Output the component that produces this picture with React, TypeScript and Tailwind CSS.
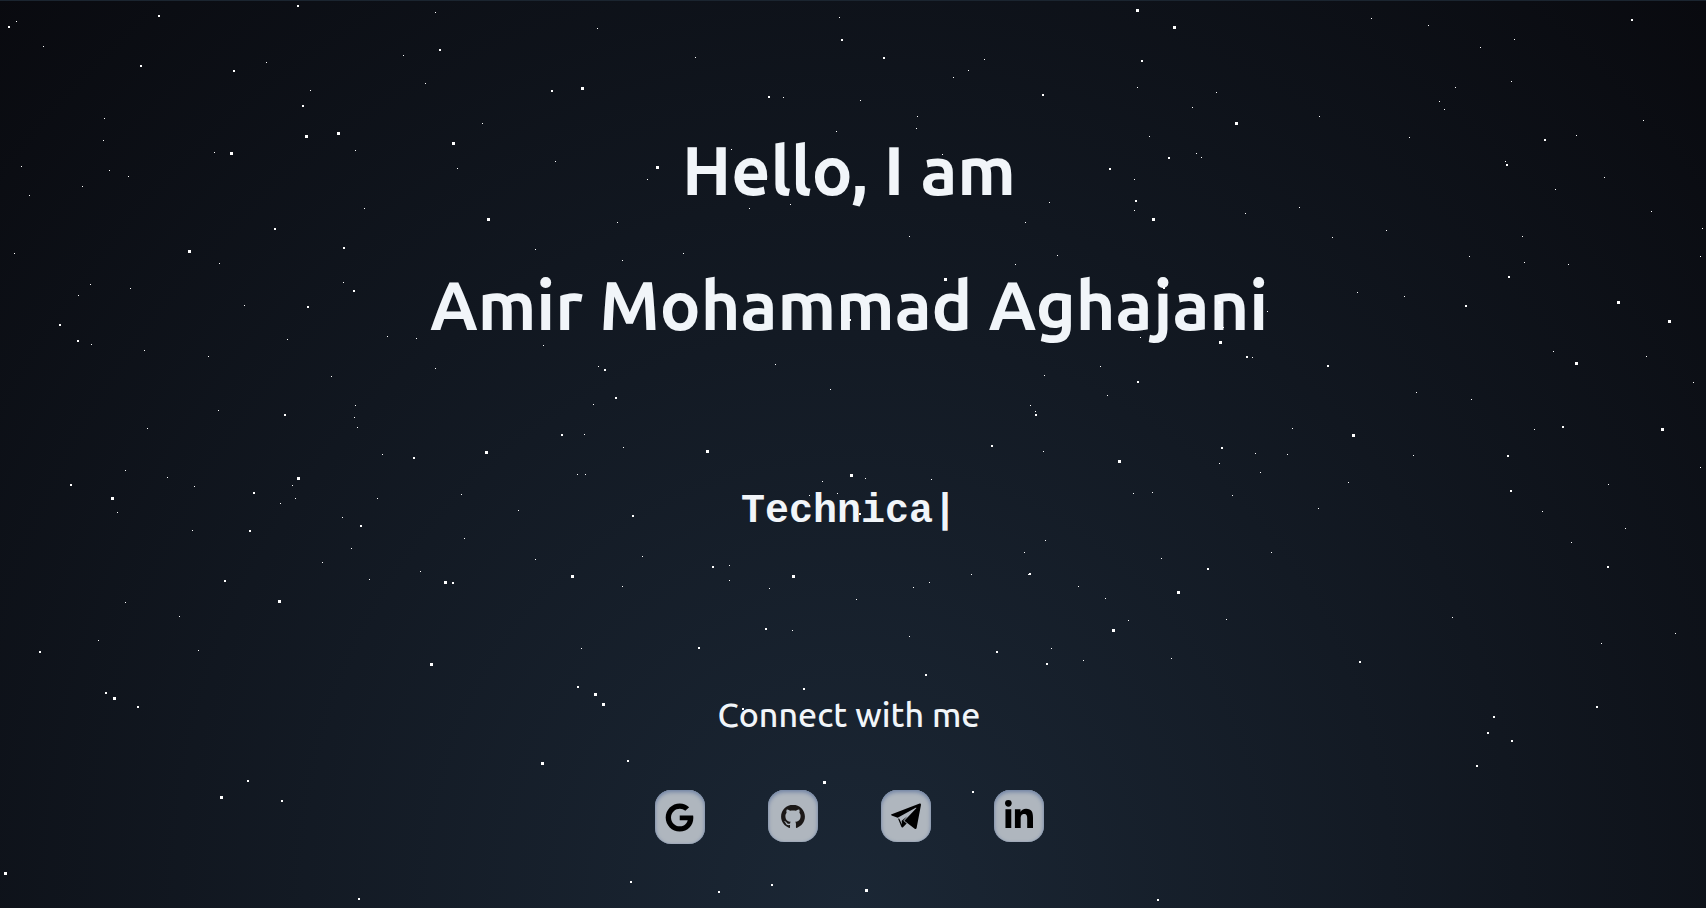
import React from "react";
import { FaGoogle, FaLinkedinIn } from "react-icons/fa";
import { DiGithubBadge } from "react-icons/di";

type Point = [number, number];

const SMALL_STARS: Point[] = [
  [16,21],[43,46],[266,62],[435,12],[403,55],[425,83],[310,90],[104,118],[103,140],[21,166],[109,170],[128,176],
  [82,186],[29,195],[214,152],[355,150],[482,123],[457,168],[555,161],[364,208],[535,249],[14,253],[219,263],
  [90,284],[78,295],[130,288],[343,282],[244,305],[91,344],[144,350],[208,356],[287,339],[387,336],[416,338],
  [543,345],[435,368],[331,376],[355,405],[354,417],[357,427],[218,410],[147,428],[382,454],
  [597,28],[839,17],[695,57],[984,59],[968,70],[953,77],[783,97],[860,100],[917,116],[916,128],[836,131],
  [731,149],[647,179],[749,208],[790,204],[942,154],[617,222],[683,253],[622,260],[909,236],[1049,202],
  [1025,222],[1057,255],[1015,264],[1134,179],[1134,210],[598,366],[775,364],[830,389],[593,404],[584,434],
  [623,447],[1100,366],[1044,375],[1107,395],[1030,405],[1035,411],[1043,451],[1137,87],
  [1216,92],[1192,107],[1371,18],[1428,25],[1514,39],[1480,47],[1511,81],[1455,87],[1439,101],[1444,109],
  [1319,116],[1409,137],[1643,120],[1576,135],[1505,161],[1604,177],[1555,189],[1651,211],[1702,228],[1700,256],
  [1149,136],[1196,153],[1201,157],[1245,213],[1299,207],[1332,237],[1386,230],[1522,236],[1469,256],[1524,262],
  [1568,264],[1357,292],[1404,296],[1267,311],[1140,337],[1252,357],[1553,351],[1646,356],[1693,382],[1416,392],
  [1471,399],[1292,428],[1534,429],[1255,453],[1287,454],[1223,327],
  [125,470],[167,477],[194,486],[292,485],[295,498],[280,503],[377,498],[461,494],[518,510],[342,517],[117,512],
  [192,530],[351,548],[464,538],[322,562],[535,559],[420,571],[369,579],[125,602],[179,616],[98,640],[198,650],
  [577,474],[585,474],[822,481],[865,478],[931,479],[809,495],[837,493],[1133,493],[642,556],[729,565],[729,580],
  [769,588],[622,586],[856,599],[913,587],[929,582],[971,574],[1024,552],[1045,540],[1028,574],[1078,586],[1105,598],
  [1128,620],[792,630],[909,636],[581,648],[1051,648],[1083,660],
  [1219,463],[1260,472],[1413,455],[1348,482],[1152,492],[1232,495],[1318,508],[1700,467],[1608,484],[1542,511],
  [1625,528],[1571,542],[1271,552],[1161,558],[1226,619],[1452,617],[1675,633],[1601,643],[1171,658],
];

const MEDIUM_STARS: Point[] = [
  [8,26],[158,15],[297,5],[140,65],[233,70],[439,49],[551,90],[302,105],[274,228],[343,247],[353,290],[307,306],
  [59,324],[77,340],[284,414],[561,434],[841,39],[883,57],[768,96],[1042,94],[1109,168],[1135,200],[604,369],
  [615,397],[1137,381],[1035,414],[991,445],[849,319],[1141,60],[1168,157],[1631,19],[1544,139],[1506,164],
  [1508,276],[1465,305],[1246,356],[1327,365],[1562,426],[1221,447],[1163,287],
  [413,457],[70,484],[253,492],[360,525],[249,530],[224,580],[452,582],[39,651],[105,692],[137,706],[247,780],
  [281,800],[358,898],[632,515],[712,566],[1029,573],[765,628],[698,647],[996,651],[1046,663],[577,686],[925,674],
  [803,688],[742,708],[627,760],[972,791],[630,881],[718,891],[771,884],[859,513],[1507,455],[1510,490],[1207,568],
  [1607,566],[1359,661],[1596,706],[1493,716],[1487,732],[1511,740],[1476,765],[1157,899],
];

const LARGE_STARS: Point[] = [
  [305,135],[337,132],[452,142],[230,152],[188,250],[487,218],[485,451],[581,87],[656,166],[944,278],[706,450],
  [1136,9],[1173,26],[1235,122],[1152,218],[1617,301],[1668,320],[1575,362],[1661,428],[1352,434],[1219,341],
  [1218,301],[297,477],[111,497],[444,581],[278,600],[430,663],[113,697],[541,762],[220,796],[4,872],[1118,460],
  [850,474],[571,575],[792,575],[1112,629],[594,693],[602,703],[823,781],[865,889],[1177,591],
];

const toPath = (points: Point[], size: number) =>
  points.map(([x, y]) => `M${x} ${y}h${size}v${size}h-${size}z`).join("");

function Starfield() {
  return (
    <svg
      aria-hidden="true"
      className="pointer-events-none absolute inset-0 h-full w-full fill-white"
      shapeRendering="crispEdges"
    >
      <path d={toPath(SMALL_STARS, 1)} />
      <path d={toPath(MEDIUM_STARS, 2)} />
      <path d={toPath(LARGE_STARS, 3)} />
    </svg>
  );
}

function PaperPlane() {
  return (
    <svg viewBox="0 0 90 80" className="h-[27px] w-[30px] fill-black" aria-hidden="true">
      <path d="M86 1 2 33q-4 2 0 4l18 7L74 14q4-1 1 2L40 53l31 24q5 2 6-3L90 5q0-5-4-4z" />
      <path d="M21 46 31 71q2 4 5 1l11-11-10-8 12-14-17 14 1 11-8-17z" />
    </svg>
  );
}

const LINKS = [
  { label: "Google", height: "h-[54px]", icon: <FaGoogle className="size-[29px]" /> },
  { label: "GitHub", height: "h-[52px]", icon: <DiGithubBadge className="size-[34px] text-[#1b1817]" /> },
  { label: "Telegram", height: "h-[52px]", icon: <PaperPlane /> },
  { label: "LinkedIn", height: "h-[52px]", icon: <FaLinkedinIn className="size-8" /> },
];

export default function App() {
  return (
    <div className="relative min-h-screen overflow-hidden bg-[radial-gradient(ellipse_at_calc(50%_-_5px)_100%,#1b2735_0%,#090a0f_100%)] pr-[8px] font-['Ubuntu','Noto_Sans',sans-serif] text-slate-100 shadow-[inset_0_1px_0_#1b2530]">
      <main className="flex flex-col items-center pt-[103px] text-center">
        <h1 className="text-[68px] leading-[135px] font-bold">
          Hello, I am
          <br />
          Amir Mohammad Aghajani
        </h1>
        <p className="mt-[109px] font-['Liberation_Mono',monospace] text-[40px] leading-[60px] font-bold">
          Technica<span>|</span>
        </p>
        <h2 className="mt-[146px] text-[34px] leading-[52px] font-medium">Connect with me</h2>
        <nav aria-label="Social links" className="mt-[50px] flex items-start gap-[63px]">
          {LINKS.map((link) => (
            <a
              key={link.label}
              href="#"
              aria-label={link.label}
              className={`flex w-[50px] items-center justify-center rounded-[16px] bg-[#afb6be] text-black shadow-[inset_0_2px_4px_#6f82a4,inset_0_0_2px_#94a3b8] ${link.height}`}
            >
              {link.icon}
            </a>
          ))}
        </nav>
      </main>
      <Starfield />
    </div>
  );
}
